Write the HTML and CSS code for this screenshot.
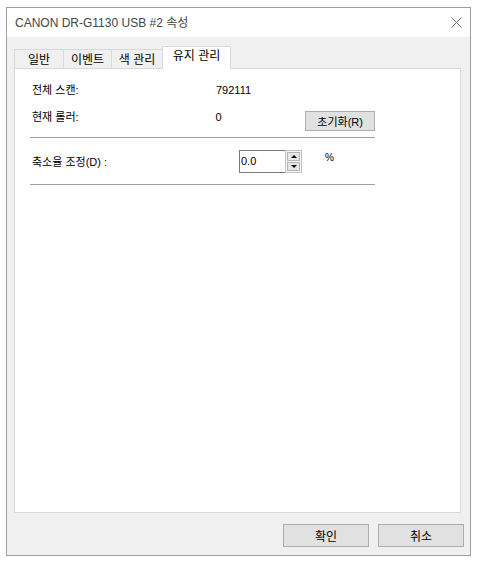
FILE: index.html
```html
<!DOCTYPE html>
<html lang="ko">
<head>
<meta charset="utf-8">
<title>CANON DR-G1130 USB #2 속성</title>
<link rel="stylesheet" href="styles.css">
</head>
<body>
<div class="window">
  <div class="titlebar">
    <span class="title">CANON DR-G1130 USB #2 속성</span>
    <svg class="close" width="11" height="11" viewBox="0 0 11 11"><path d="M0.5 0.5 L10.5 10.5 M10.5 0.5 L0.5 10.5" stroke="#6a6a6a" stroke-width="1" fill="none"/></svg>
  </div>
  <div class="client">
    <div class="tabs">
      <div class="tab t1">일반</div>
      <div class="tab t2">이벤트</div>
      <div class="tab t3">색 관리</div>
      <div class="tab active">유지 관리</div>
    </div>
    <div class="panel">
      <div class="content">
        <div class="row r1">
          <span class="label">전체 스캔:</span>
          <span class="value">792111</span>
        </div>
        <div class="row r2">
          <span class="label">현재 롤러:</span>
          <span class="value v2">0</span>
          <button class="btn reset">초기화(R)</button>
        </div>
        <div class="sep"></div>
        <div class="row r3">
          <span class="label l3">축소율 조정(D) :</span>
          <div class="spinbox">
            <div class="field">0.0</div>
            <div class="spin">
              <div class="arrowbtn"><span class="up"></span></div>
              <div class="arrowbtn"><span class="down"></span></div>
            </div>
          </div>
          <span class="pct">%</span>
        </div>
        <div class="sep sep2"></div>
      </div>
    </div>
    <div class="footer">
      <button class="btn dlg">확인</button>
      <button class="btn dlg">취소</button>
    </div>
  </div>
</div>
</body>
</html>
```

FILE: styles.css
```css
html, body {
  margin: 0;
  padding: 0;
  background: #ffffff;
}
body {
  width: 477px;
  height: 562px;
  overflow: hidden;
  font-family: "Liberation Sans", "Noto Sans CJK KR", sans-serif;
  color: #000;
}
.window {
  margin: 7px 0 0 6px;
  width: 465px;
  height: 549px;
  box-sizing: border-box;
  border: 1px solid #9d9d9d;
  background: #fff;
  display: flex;
  flex-direction: column;
}
.titlebar {
  height: 29px;
  flex: none;
  display: flex;
  align-items: center;
  padding-left: 8px;
  background: #fff;
}
.title {
  flex: 1;
  font-size: 12px;
  color: #444;
  line-height: 14px;
}
.close {
  margin-right: 8px;
  display: block;
}
.client {
  flex: 1;
  background: #f0f0f0;
  padding: 9px 6px 8px 7px;
  display: flex;
  flex-direction: column;
  min-height: 0;
}
.tabs {
  display: flex;
  align-items: flex-end;
  height: 23px;
  margin-bottom: -1px;
  position: relative;
  z-index: 1;
  font-size: 12px;
}
.tab {
  box-sizing: border-box;
  height: 20px;
  border-top: 1px solid #d9d9d9;
  border-left: 1px solid #d9d9d9;
  border-bottom: 1px solid #d9d9d9;
  background: #f0f0f0;
  display: flex;
  align-items: center;
  justify-content: center;
  line-height: 14px;
  padding-top: 1px;
}
.t1 { width: 49px; }
.t2 { width: 48px; }
.t3 { width: 51px; }
.tab.active {
  width: 69px;
  height: 23px;
  border-right: 1px solid #d9d9d9;
  border-bottom: none;
  background: #fff;
  padding-top: 0;
  padding-bottom: 4px;
}
.panel {
  flex: 1;
  margin-right: 3px;
  background: #fff;
  border: 1px solid #d9d9d9;
  min-height: 0;
}
.content {
  padding: 13px 0 0 15px;
  width: 345px;
  font-size: 11px;
}
.row {
  display: flex;
}
.r1 {
  height: 16px;
  line-height: 16px;
}
.label {
  box-sizing: border-box;
  width: 186px;
  padding-left: 2px;
  line-height: 16px;
}
.value {
  line-height: 16px;
}
.v2 {
  width: 90px;
}
.r2 {
  margin-top: 11px;
  align-items: flex-start;
  height: 22px;
}
.btn {
  font-family: "Liberation Sans", "Noto Sans CJK KR", sans-serif;
  font-size: 11px;
  color: #000;
  background: #e1e1e1;
  border: 1px solid #adadad;
  box-sizing: border-box;
  padding: 0;
  margin: 0;
  display: flex;
  align-items: center;
  justify-content: center;
}
.reset {
  width: 70px;
  height: 20px;
  margin-top: 2px;
}
.sep {
  height: 1px;
  background: #a0a0a0;
  margin-top: 6px;
}
.r3 {
  margin-top: 12px;
  height: 23px;
  align-items: center;
}
.l3 {
  width: 209px;
  padding-top: 1px;
}
.spinbox {
  display: flex;
  width: 63px;
  height: 23px;
}
.field {
  box-sizing: border-box;
  width: 46px;
  height: 23px;
  border: 1px solid #7a7a7a;
  border-right: none;
  padding-left: 1px;
  line-height: 21px;
  background: #fff;
}
.spin {
  box-sizing: border-box;
  width: 17px;
  height: 23px;
  border: 1px solid #c2c2c2;
  background: #f6f6f6;
  display: flex;
  flex-direction: column;
  padding: 1px;
  gap: 1px;
}
.arrowbtn {
  flex: 1;
  box-sizing: border-box;
  border: 1px solid #b5b5b5;
  background: #e6e6e6;
  display: flex;
  align-items: center;
  justify-content: center;
}
.up {
  width: 0;
  height: 0;
  border-left: 3px solid transparent;
  border-right: 3px solid transparent;
  border-bottom: 3px solid #000;
}
.down {
  width: 0;
  height: 0;
  border-left: 3px solid transparent;
  border-right: 3px solid transparent;
  border-top: 3px solid #000;
}
.pct {
  align-self: flex-start;
  margin-left: 23px;
  margin-top: 2px;
  line-height: 12px;
  font-size: 10px;
}
.sep2 {
  margin-top: 11px;
}
.footer {
  flex: none;
  display: flex;
  justify-content: flex-end;
  gap: 9px;
  margin-top: 11px;
}
.dlg {
  width: 86px;
  height: 23px;
  font-size: 12px;
}
```
